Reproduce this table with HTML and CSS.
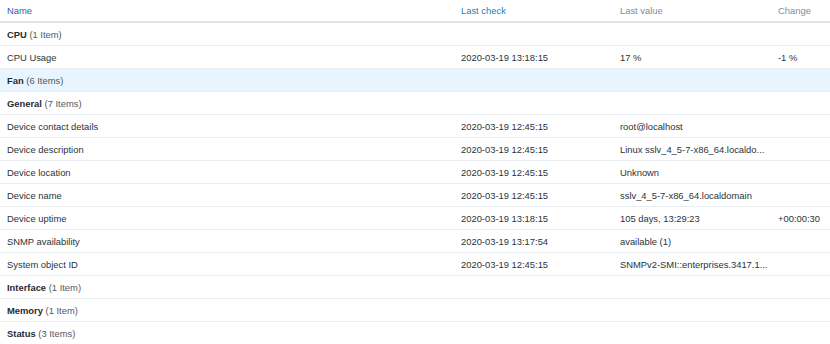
FILE: index.html
```html
<!DOCTYPE html>
<html>
<head>
  <title>Latest data</title>
  <link rel="stylesheet" href="styles.css">
</head>
<body>
  <table class="data-table">
    <colgroup>
      <col class="col-name">
      <col class="col-check">
      <col class="col-value">
      <col class="col-change">
    </colgroup>
    <thead>
      <tr>
        <th class="sort-link">Name</th>
        <th class="sort-link light">Last check</th>
        <th>Last value</th>
        <th>Change</th>
      </tr>
    </thead>
    <tbody>
      <tr class="group"><td colspan="4"><b>CPU</b> <span class="count">(1 Item)</span></td></tr>
      <tr><td>CPU Usage</td><td>2020-03-19 13:18:15</td><td>17 %</td><td>-1 %</td></tr>
      <tr class="group selected"><td colspan="4"><b>Fan</b> <span class="count">(6 Items)</span></td></tr>
      <tr class="group"><td colspan="4"><b>General</b> <span class="count">(7 Items)</span></td></tr>
      <tr><td>Device contact details</td><td>2020-03-19 12:45:15</td><td>root@localhost</td><td></td></tr>
      <tr><td>Device description</td><td>2020-03-19 12:45:15</td><td>Linux sslv_4_5-7-x86_64.localdo...</td><td></td></tr>
      <tr><td>Device location</td><td>2020-03-19 12:45:15</td><td>Unknown</td><td></td></tr>
      <tr><td>Device name</td><td>2020-03-19 12:45:15</td><td>sslv_4_5-7-x86_64.localdomain</td><td></td></tr>
      <tr><td>Device uptime</td><td>2020-03-19 13:18:15</td><td>105 days, 13:29:23</td><td>+00:00:30</td></tr>
      <tr><td>SNMP availability</td><td>2020-03-19 13:17:54</td><td>available (1)</td><td></td></tr>
      <tr><td>System object ID</td><td>2020-03-19 12:45:15</td><td>SNMPv2-SMI::enterprises.3417.1...</td><td></td></tr>
      <tr class="group"><td colspan="4"><b>Interface</b> <span class="count">(1 Item)</span></td></tr>
      <tr class="group"><td colspan="4"><b>Memory</b> <span class="count">(1 Item)</span></td></tr>
      <tr class="group"><td colspan="4"><b>Status</b> <span class="count">(3 Items)</span></td></tr>
    </tbody>
  </table>
</body>
</html>
```
FILE: styles.css
```css
body {
  margin: 0;
  font-family: "Liberation Sans", Arial, sans-serif;
  font-size: 9.4px;
  color: #2a3439;
  background: #fff;
}
.data-table {
  width: 100%;
  border-collapse: collapse;
  table-layout: fixed;
}
.col-name {
  width: 454px;
}
.col-check {
  width: 159px;
}
.col-value {
  width: 158px;
}
.data-table th {
  height: 21px;
  padding: 0 0 0 7px;
  text-align: left;
  font-weight: normal;
  color: #7d8f99;
  border-bottom: 2px solid #dfe4e7;
}
.data-table th.sort-link {
  color: #2d5fb8;
}
.data-table th.sort-link.light {
  color: #1a80c6;
}
.data-table td {
  height: 22px;
  padding: 0 0 0 7px;
  border-bottom: 1px solid #ebeef0;
  white-space: nowrap;
  overflow: hidden;
}
.group b {
  font-weight: bold;
  color: #1f2c33;
}
.count {
  color: #50595e;
}
.selected td {
  background-color: #e8f5ff;
}
```
